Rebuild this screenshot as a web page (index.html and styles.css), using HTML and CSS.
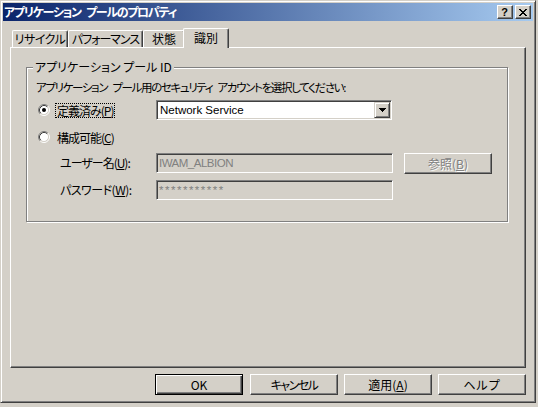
FILE: index.html
```html
<!DOCTYPE html>
<html lang="ja">
<head>
<meta charset="utf-8">
<title>アプリケーション プールのプロパティ</title>
<link rel="stylesheet" href="styles.css">
</head>
<body>
<div class="window">
  <div class="titlebar">
    <span class="title">アプリケーション プールのプロパティ</span>
    <div class="caption-buttons">
      <span class="cap-btn cap-help">?</span>
      <span class="cap-btn cap-close">
        <svg width="8" height="7" viewBox="0 0 8 7" shape-rendering="crispEdges"><path fill="#000" d="M0 0h2v1H0zM6 0h2v1H6zM1 1h2v1H1zM5 1h2v1H5zM2 2h4v1H2zM3 3h2v1H3zM2 4h4v1H2zM1 5h2v1H1zM5 5h2v1H5zM0 6h2v1H0zM6 6h2v1H6z"/></svg>
      </span>
    </div>
  </div>
  <div class="client">
    <div class="tabs">
      <div class="tab tab-recycle">リサイクル</div>
      <div class="tab tab-perf">パフォーマンス</div>
      <div class="tab tab-state">状態</div>
      <div class="tab tab-ident selected">識別</div>
    </div>
    <div class="panel">
      <div class="group">
        <div class="legend">アプリケーション プール ID</div>
        <div class="prompt">アプリケーション プール用のセキュリティ アカウントを選択してください:</div>
        <div class="row row-predef">
          <div class="radio-cell">
            <svg class="radio" width="12" height="12" viewBox="0 0 12 12">
              <circle cx="6" cy="6" r="4.5" fill="#fff"/>
              <path d="M2.11 9.89A5.5 5.5 0 0 1 9.89 2.11" fill="none" stroke="#808080"/>
              <path d="M9.89 2.11A5.5 5.5 0 0 1 2.11 9.89" fill="none" stroke="#fff"/>
              <path d="M2.82 9.18A4.5 4.5 0 0 1 9.18 2.82" fill="none" stroke="#404040"/>
              <path d="M9.18 2.82A4.5 4.5 0 0 1 2.82 9.18" fill="none" stroke="#d4d0c8"/>
              <circle cx="6" cy="6" r="2" fill="#000"/>
            </svg>
            <span class="radio-label focus">定義済み(<u>P</u>)</span>
          </div>
          <div class="combo">
            <span class="combo-text">Network Service</span>
            <span class="drop">
              <svg width="7" height="4" viewBox="0 0 7 4" shape-rendering="crispEdges"><path fill="#000" d="M0 0h7v1H0zM1 1h5v1H1zM2 2h3v1H2zM3 3h1v1H3z"/></svg>
            </span>
          </div>
        </div>
        <div class="row row-custom">
          <div class="radio-cell">
            <svg class="radio" width="12" height="12" viewBox="0 0 12 12">
              <circle cx="6" cy="6" r="4.5" fill="#fff"/>
              <path d="M2.11 9.89A5.5 5.5 0 0 1 9.89 2.11" fill="none" stroke="#808080"/>
              <path d="M9.89 2.11A5.5 5.5 0 0 1 2.11 9.89" fill="none" stroke="#fff"/>
              <path d="M2.82 9.18A4.5 4.5 0 0 1 9.18 2.82" fill="none" stroke="#404040"/>
              <path d="M9.18 2.82A4.5 4.5 0 0 1 2.82 9.18" fill="none" stroke="#d4d0c8"/>
            </svg>
            <span class="radio-label">構成可能(<u>C</u>)</span>
          </div>
        </div>
        <div class="row row-user">
          <span class="field-label">ユーザー名(<u>U</u>):</span>
          <div class="edit edit-user">IWAM_ALBION</div>
          <div class="btn browse disabled">参照(<u>B</u>)</div>
        </div>
        <div class="row row-pass">
          <span class="field-label label-pass">パスワード(<u>W</u>):</span>
          <div class="edit edit-pass">***********</div>
        </div>
      </div>
    </div>
    <div class="buttons">
      <div class="btn default">OK</div>
      <div class="btn btn-cancel">キャンセル</div>
      <div class="btn">適用(<u>A</u>)</div>
      <div class="btn btn-help">ヘルプ</div>
    </div>
  </div>
</div>
</body>
</html>
```
FILE: styles.css
```css
html, body {
  margin: 0;
  padding: 0;
}
body {
  background: #d4d0c8;
  font-family: "Noto Sans CJK JP", sans-serif;
  font-size: 12px;
  font-feature-settings: "palt";
  color: #000;
}
.window {
  width: 536px;
  height: 403px;
  box-sizing: border-box;
  border: 1px solid;
  border-color: #d4d0c8 #404040 #404040 #d4d0c8;
  box-shadow: inset 1px 1px #fff, inset -1px -1px #808080;
  padding: 2px;
  display: flex;
  flex-direction: column;
}
.titlebar {
  height: 18px;
  flex: none;
  background: linear-gradient(to right, #0a246a, #a6caf0);
  display: flex;
  align-items: center;
  justify-content: space-between;
  padding: 0 2px 0 1px;
}
.title {
  color: #fff;
  font-weight: bold;
  line-height: 18px;
  letter-spacing: -1.3px;
  word-spacing: 4px;
  white-space: nowrap;
}
.caption-buttons {
  display: flex;
  gap: 2px;
}
.cap-btn {
  width: 16px;
  height: 14px;
  box-sizing: border-box;
  background: #d4d0c8;
  border: 1px solid;
  border-color: #fff #404040 #404040 #fff;
  box-shadow: inset -1px -1px #808080;
  display: flex;
  align-items: center;
  justify-content: center;
}
.cap-help {
  font-family: "Liberation Sans", sans-serif;
  font-weight: bold;
  font-size: 11px;
  line-height: 12px;
  padding-right: 1px;
}
.cap-close svg {
  display: block;
  margin-right: 1px;
}
.client {
  flex: 1;
  padding: 7px 7px 0 7px;
  display: flex;
  flex-direction: column;
}
.tabs {
  display: flex;
  align-items: flex-end;
  height: 19px;
  padding-left: 2px;
  position: relative;
  z-index: 1;
}
.tab {
  height: 17px;
  box-sizing: border-box;
  border-left: 1px solid #fff;
  border-top: 1px solid #fff;
  border-right: 1px solid #404040;
  box-shadow: inset -1px 0 #808080;
  border-radius: 2px 2px 0 0;
  text-align: center;
  line-height: 16px;
  white-space: nowrap;
  background: #d4d0c8;
}
.tab-recycle { width: 56px; letter-spacing: -0.5px; }
.tab-perf { width: 75px; letter-spacing: -1px; }
.tab-state { width: 42px; }
.tab-ident { width: 42px; }
.tab.selected {
  width: 46px;
  height: 20px;
  margin: 0 -2px -1px -2px;
  line-height: 17px;
}
.panel {
  height: 321px;
  box-sizing: border-box;
  border-left: 1px solid #fff;
  border-top: 1px solid #fff;
  border-right: 1px solid #404040;
  border-bottom: 1px solid #404040;
  box-shadow: inset -1px -1px #808080;
  padding: 19px 17px 0 15px;
}
.group {
  border: 1px solid #808080;
  box-shadow: 1px 1px 0 #fff, inset 1px 1px 0 #fff;
  padding: 0 0 21px 0;
}
.legend {
  width: max-content;
  margin: -8px 0 0 6px;
  padding: 0 2px;
  background: #d4d0c8;
  line-height: 14px;
}
.prompt {
  margin: 6px 0 0 9px;
  line-height: 14px;
  font-size: 11.5px;
  letter-spacing: -1.35px;
  word-spacing: 4px;
  white-space: nowrap;
}
.row {
  display: flex;
  align-items: center;
  height: 20px;
  padding-left: 11px;
}
.row-predef { margin-top: 6px; }
.row-custom { margin-top: 7px; }
.row-user { margin-top: 6px; height: 21px; align-items: flex-start; }
.row-pass { margin-top: 6px; }
.radio-cell {
  width: 118px;
  display: flex;
  align-items: center;
}
.radio {
  display: block;
  flex: none;
}
.radio-label {
  margin-left: 5px;
  padding: 0 1px;
  line-height: 13px;
  border: 1px solid transparent;
  letter-spacing: -1px;
}
.radio-label.focus {
  border: 1px dotted #000;
}
.field-label {
  width: 96px;
  padding-left: 22px;
  line-height: 20px;
  letter-spacing: -1px;
  white-space: nowrap;
}
.label-pass {
  letter-spacing: -0.5px;
}
.combo {
  width: 236px;
  height: 20px;
  box-sizing: border-box;
  border: 1px solid;
  border-color: #808080 #fff #fff #808080;
  box-shadow: inset 1px 1px #404040, inset -1px -1px #d4d0c8;
  background: #fff;
  padding: 1px 1px 1px 3px;
  display: flex;
  align-items: center;
  justify-content: space-between;
}
.combo-text {
  font-family: "Liberation Sans", sans-serif;
  font-size: 11.5px;
}
.drop {
  width: 16px;
  height: 16px;
  box-sizing: border-box;
  border: 1px solid;
  border-color: #d4d0c8 #404040 #404040 #d4d0c8;
  box-shadow: inset 1px 1px #fff, inset -1px -1px #808080;
  background: #d4d0c8;
  display: flex;
  align-items: center;
  justify-content: center;
}
.drop svg { display: block; }
.edit {
  width: 237px;
  height: 20px;
  box-sizing: border-box;
  border: 1px solid;
  border-color: #808080 #fff #fff #808080;
  box-shadow: inset 1px 1px #404040, inset -1px -1px #d4d0c8;
  padding-left: 2px;
  color: #808080;
  font-family: "Liberation Sans", sans-serif;
  font-size: 11.5px;
  line-height: 18px;
}
.edit-user {
  letter-spacing: -0.5px;
}
.edit-pass {
  letter-spacing: 1.5px;
}
.btn {
  width: 88px;
  height: 21px;
  box-sizing: border-box;
  border: 1px solid;
  border-color: #fff #404040 #404040 #fff;
  box-shadow: inset -1px -1px #808080;
  background: #d4d0c8;
  display: flex;
  align-items: center;
  justify-content: center;
  line-height: 14px;
  white-space: nowrap;
}
.btn.default {
  border-color: #000;
  box-shadow: inset 1px 1px #fff, inset -1px -1px #404040, inset -2px -2px #808080;
  margin-right: 1px;
}
.btn-cancel {
  letter-spacing: -1.5px;
}
.btn-help {
  letter-spacing: 1px;
}
.browse {
  margin-left: 11px;
}
.disabled {
  color: #808080;
  text-shadow: 1px 1px 0 #fff;
}
.buttons {
  display: flex;
  justify-content: flex-end;
  gap: 6px;
  margin-top: 6px;
}
```
